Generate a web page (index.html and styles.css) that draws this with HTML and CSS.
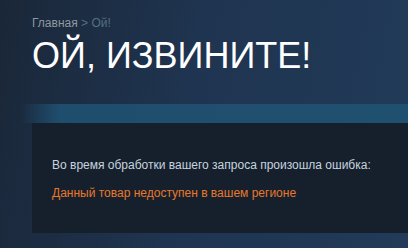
FILE: index.html
```html
<!DOCTYPE html>
<html lang="ru">
<head>
    <meta charset="UTF-8">
    <title>Ой, извините!</title>
    <link rel="stylesheet" href="styles.css">
</head>
<body>
    <div class="page">
        <div class="breadcrumbs">
            <a href="#">Главная</a> &gt; <span>Ой!</span>
        </div>
        <h1 class="title">Ой, извините!</h1>
    </div>

    <div class="error-band">
        <div class="error-box">
            <p class="error-intro">Во время обработки вашего запроса произошла ошибка:</p>
            <p class="error-text">Данный товар недоступен в вашем регионе</p>
        </div>
    </div>
</body>
</html>
```

FILE: styles.css
```css
body { margin: 0; font-family: Arial, "Liberation Sans", sans-serif; background: linear-gradient(100deg, #1a2738 0%, #1f3450 45%, #213b58 100%); height: 248px; overflow: hidden; }
.page { padding: 16px 0 0 32px; }
.breadcrumbs { font-size: 12px; color: #56707f; line-height: 14px; }
.breadcrumbs a { color: #8f98a0; text-decoration: none; }
.breadcrumbs span { color: #56707f; }
.title { margin: 6px 0 0; font-size: 36px; font-weight: normal; color: #fff; text-transform: uppercase; line-height: 40px; }
.error-band { margin: 28px 0 0 20px; padding: 19px 0 0 12px; background: linear-gradient(90deg, rgba(31, 76, 108, 0) 0%, #1f4d6e 10%, #20506f 100%) top / 100% 19px no-repeat; }
.error-box { background: #16202d; padding: 34px 20px 26px; height: 110px; box-sizing: border-box; }
.error-intro { margin: 0; font-size: 12px; color: #c6d4df; line-height: 16px; }
.error-text { margin: 12px 0 0; font-size: 12px; color: #e8782a; line-height: 16px; }
```
